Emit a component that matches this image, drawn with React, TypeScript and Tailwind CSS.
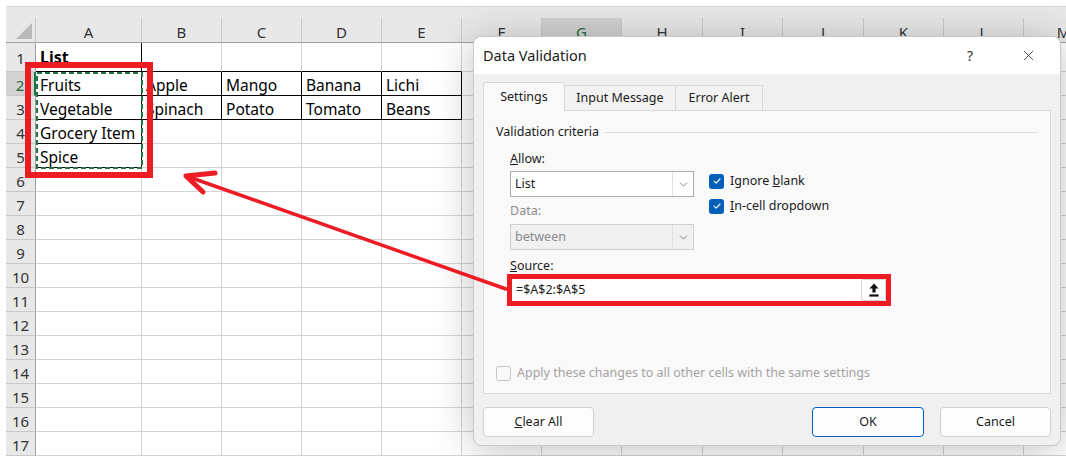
import { ChevronDown, X } from "lucide-react";

const COLS = ["A", "B", "C", "D", "E", "F", "G", "H", "I", "J", "K", "L", "M"];
const ROWS = Array.from({ length: 17 }, (_, i) => i + 1);

const cells: Record<string, string> = {
  A1: "List",
  A2: "Fruits",
  B2: "Apple",
  C2: "Mango",
  D2: "Banana",
  E2: "Lichi",
  A3: "Vegetable",
  B3: "Spinach",
  C3: "Potato",
  D3: "Tomato",
  E3: "Beans",
  A4: "Grocery Item",
  A5: "Spice",
};

// cells drawn with a thin black box
const boxed = new Set(["A1", "A2", "A3", "A4", "A5", "B2", "C2", "D2", "E2", "B3", "C3", "D3", "E3"]);
const isBoxed = (c: number, r: number) => c >= 0 && c < COLS.length && boxed.has(`${COLS[c]}${r}`);

const CheckedBox = () => (
  <span className="flex h-[15px] w-[15px] items-center justify-center rounded-[3px] bg-[#005fb8]">
    <svg viewBox="0 0 12 12" className="h-[10px] w-[10px]" fill="none">
      <path d="M2.5 6.2 L5 8.6 L9.6 3.6" stroke="white" strokeWidth="1.4" strokeLinecap="round" strokeLinejoin="round" />
    </svg>
  </span>
);

const Sheet = () => (
  <div className="w-max">
    <div className="h-[12px] w-[1060px] border-t border-[#d6d6d6] bg-[#e8e8e8]" />
    <div className="grid grid-cols-[30px_106px_80px_80px_80px_80px_80px_80px_81px_80px_81px_80px_80px_80px] grid-rows-[25px_29px_repeat(16,24px)]">
      {/* corner */}
      <div className="relative border-r border-b border-r-[#c8c8c8] border-b-[#a0a0a0] bg-[#e8e8e8]">
        <svg viewBox="0 0 16 16" className="absolute right-[3px] bottom-[3px] h-[16px] w-[16px]">
          <path d="M16 0 L16 16 L0 16 Z" fill="#b9b9b9" />
        </svg>
      </div>
      {COLS.map((c) => (
        <div
          key={c}
          className={`flex items-center justify-center border-r border-b border-r-[#c8c8c8] border-b-[#a0a0a0] pt-[4px] text-[15px] ${
            c === "G" ? "bg-[#d2d2d2] text-[#1e6b41]" : "bg-[#e8e8e8] text-[#333]"
          }`}
        >
          {c}
        </div>
      ))}
      {ROWS.map((r) => (
        <div key={r} className="contents">
          <div
            className={`flex items-center justify-center border-b border-b-[#c8c8c8] pt-[3px] text-[15px] ${
              r === 2
                ? "border-r-2 border-r-[#217346] bg-[#d2d2d2] text-[#1e6b41]"
                : "border-r border-r-[#a0a0a0] bg-[#e8e8e8] text-[#333]"
            }`}
          >
            {r}
          </div>
          {COLS.map((c, ci) => {
            const right = isBoxed(ci, r) || isBoxed(ci + 1, r);
            const bottom = isBoxed(ci, r) || isBoxed(ci, r + 1);
            const text = cells[`${c}${r}`];
            return (
              <div
                key={c}
                className={`flex items-end whitespace-nowrap border-r border-b bg-white pl-[4px] text-[15.5px] leading-[20px] text-black ${
                  right ? "border-r-black" : "border-r-[#d4d4d4]"
                } ${bottom ? "border-b-black" : "border-b-[#d4d4d4]"} ${r === 1 ? "pb-[4px] text-[16px] font-bold" : ""}`}
              >
                {text}
              </div>
            );
          })}
        </div>
      ))}
    </div>
  </div>
);

const Select = ({ value, disabled }: { value: string; disabled?: boolean }) => (
  <div
    className={`flex h-[26px] w-[184px] items-stretch border ${
      disabled ? "border-[#cfcfcf] bg-[#f0f0f0] text-[#8a8a8a]" : "border-[#adadad] bg-white text-[#1b1b1b]"
    }`}
  >
    <span className="flex flex-1 items-center pl-[4px] pt-[1px]">{value}</span>
    <span className="flex w-[21px] items-center justify-center border-l border-[#e0e0e0]">
      <ChevronDown size={13} strokeWidth={1.3} className="text-[#555]" />
    </span>
  </div>
);

const Dialog = () => (
  <div className="absolute top-[36px] left-[473px] flex h-[410px] w-[588px] flex-col rounded-[8px] border border-[#c9c9c9] bg-[#f0f0f0] text-[12.5px] text-[#1b1b1b] shadow-[0_4px_40px_rgba(0,0,0,0.25)]">
    {/* title bar */}
    <div className="flex h-[37px] items-center justify-between rounded-t-[8px] bg-white pl-[9px] pr-[9px]">
      <span className="text-[14.5px]">Data Validation</span>
      <div className="flex items-center gap-[12px]">
        <span className="flex w-[46px] justify-center text-[14px] text-[#333]">?</span>
        <span className="flex w-[46px] justify-center">
          <X size={17} strokeWidth={1.1} className="text-[#222]" />
        </span>
      </div>
    </div>

    <div className="flex flex-1 flex-col px-[9px] pt-[8px]">
      {/* tabs */}
      <div className="flex h-[28px] items-end">
        <div className="relative z-10 -mb-px flex h-[29px] w-[82px] items-center justify-center rounded-t-[3px] border border-b-0 border-[#d9d9d9] bg-[#f9f9f9] pt-[1px]">
          Settings
        </div>
        <div className="flex h-[25px] w-[111px] items-center justify-center border border-b-0 border-l-0 border-[#d9d9d9] bg-[#f2f2f2] pt-[1px]">
          Input Message
        </div>
        <div className="flex h-[25px] w-[87px] items-center justify-center border border-b-0 border-l-0 border-[#d9d9d9] bg-[#f2f2f2] pt-[1px]">
          Error Alert
        </div>
      </div>

      {/* tab panel */}
      <div className="flex h-[284px] flex-col border border-[#d9d9d9] bg-[#f9f9f9]">
        <div className="mt-[11px] flex h-[20px] items-center gap-[6px] pl-[12px] pr-[13px]">
          <span>Validation criteria</span>
          <span className="h-px flex-1 bg-[#dcdcdc]" />
        </div>

        <div className="mt-[7px] pl-[26px]">
          <div className="flex h-[20px] items-center">
            <span>
              <span className="underline">A</span>llow:
            </span>
          </div>
          <div className="mt-[2px] flex">
            <div className="w-[184px]">
              <Select value="List" />
              <div className="mt-[4px] flex h-[20px] items-center text-[#8a8a8a]">Data:</div>
              <div className="mt-[3px]">
                <Select value="between" disabled />
              </div>
            </div>
            <div className="ml-[15px] flex flex-col gap-[9px] pt-[2px]">
              <div className="flex h-[16px] items-center gap-[6px]">
                <CheckedBox />
                <span>
                  Ignore <span className="underline">b</span>lank
                </span>
              </div>
              <div className="flex h-[16px] items-center gap-[6px]">
                <CheckedBox />
                <span>
                  <span className="underline">I</span>n-cell dropdown
                </span>
              </div>
            </div>
          </div>
          <div className="mt-[6px] flex h-[20px] items-center">
            <span>
              <span className="underline">S</span>ource:
            </span>
          </div>
          <div className="relative mt-[1px] flex h-[26px] w-[378px] items-stretch border border-[#adadad] bg-white">
            <span className="flex flex-1 items-center pl-[5px] pt-[1px]">=$A$2:$A$5</span>
            <span className="my-[1px] mr-[1px] flex w-[25px] items-center justify-center rounded-[2px] border border-[#d6d6d6] bg-white">
              <svg viewBox="0 0 10 14" className="h-[14px] w-[10px]">
                <path d="M5 0.5 L9.6 5.6 L6.6 5.6 L6.6 9.6 L3.4 9.6 L3.4 5.6 L0.4 5.6 Z" fill="#111" />
                <rect x="0.4" y="11.4" width="9.2" height="2.2" fill="#111" />
              </svg>
            </span>
            {/* red annotation box */}
            <div className="pointer-events-none absolute -inset-[4px] border-[5px] border-[#ed1c24]" />
          </div>
        </div>

        <div className="mt-auto mb-[10px] flex items-center gap-[6px] pl-[12px] text-[#a3a3a3]">
          <span className="h-[15px] w-[15px] rounded-[3px] border border-[#c4c4c4] bg-[#f9f9f9]" />
          <span>Apply these changes to all other cells with the same settings</span>
        </div>
      </div>

      {/* buttons */}
      <div className="mt-[13px] flex">
        <button className="flex h-[30px] w-[111px] items-center justify-center rounded-[4px] border border-[#d0d0d0] bg-[#fdfdfd] pt-[1px]">
          <span>
            <span className="underline">C</span>lear All
          </span>
        </button>
        <button className="ml-auto flex h-[30px] w-[112px] items-center justify-center rounded-[4px] border border-[#005fb8] bg-[#fdfdfd] pt-[1px]">
          OK
        </button>
        <button className="ml-[16px] flex h-[30px] w-[111px] items-center justify-center rounded-[4px] border border-[#d0d0d0] bg-[#fdfdfd] pt-[1px]">
          Cancel
        </button>
      </div>
    </div>
  </div>
);

export default function App() {
  return (
    <div className="relative h-[456px] w-[1066px] overflow-hidden bg-white pt-[6px] pl-[6px] font-['Noto_Sans',sans-serif]">
      <Sheet />

      {/* copy marquee around A2:A5 */}
      <svg className="pointer-events-none absolute top-[72px] left-[36px] h-[97px] w-[107px]" viewBox="0 0 107 97">
        <rect x="1" y="1" width="105" height="95" fill="none" stroke="#217346" strokeWidth="2" strokeDasharray="5 3" />
      </svg>

      {/* red annotation around the list */}
      <div className="pointer-events-none absolute top-[62px] left-[25px] h-[116px] w-[128px] border-[6px] border-[#ed1c24]" />

      <Dialog />

      {/* arrow from source box to the list */}
      <svg className="pointer-events-none absolute inset-0 h-[456px] w-[1066px]" viewBox="0 0 1066 456">
        <line x1="506" y1="289" x2="189" y2="177" stroke="#ed1c24" strokeWidth="3.5" strokeLinecap="round" />
        <polyline points="215,173 186,176 203,192" fill="none" stroke="#ed1c24" strokeWidth="5" strokeLinecap="round" strokeLinejoin="round" />
      </svg>
    </div>
  );
}
